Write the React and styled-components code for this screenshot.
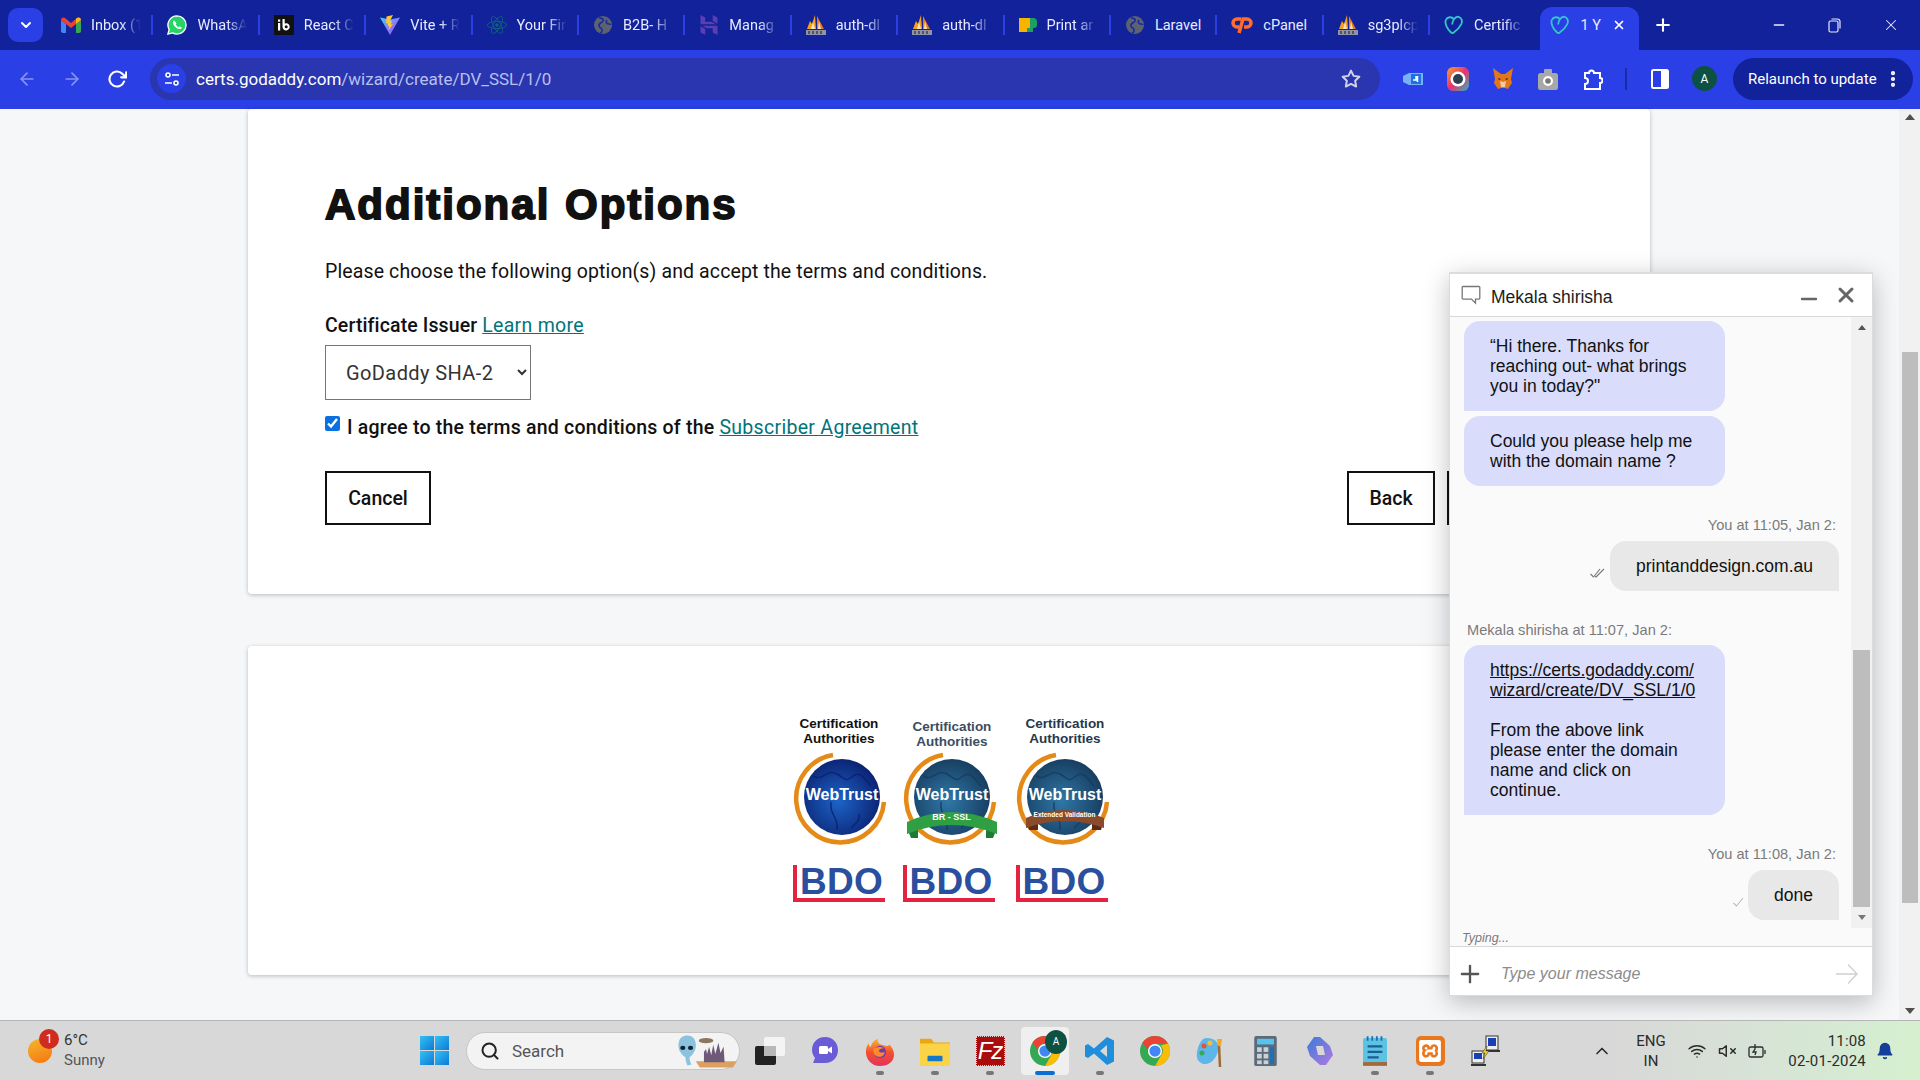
import styled, { createGlobalStyle } from "styled-components";
import { FaReact } from "react-icons/fa";
import { SiHostinger, SiXampp } from "react-icons/si";
import {
  FiArrowLeft,
  FiArrowRight,
  FiRotateCw,
  FiStar,
  FiChevronDown,
  FiX,
  FiMinus,
  FiPlus,
  FiMoreVertical,
  FiSearch,
  FiChevronUp,
  FiWifi,
  FiVolumeX,
  FiBell,
} from "react-icons/fi";

const GlobalStyle = createGlobalStyle`
  html, body {
    margin: 0;
    padding: 0;
    height: 100%;
    overflow: hidden;
  }
  * { box-sizing: border-box; }
  body { font-family: "Roboto", "Liberation Sans", sans-serif; }
`;

const Screen = styled.div`
  width: 1920px;
  height: 1080px;
  display: flex;
  flex-direction: column;
  overflow: hidden;
`;

/* browser chrome */
const TabStrip = styled.div`
  height: 50px;
  display: flex;
  align-items: center;
  background: #11229b;
  padding-left: 8px;
`;

const TabMenu = styled.div`
  width: 35px;
  height: 34px;
  margin-right: 4px;
  border-radius: 10px;
  background: #2a3fe6;
  color: #fff;
  display: flex;
  align-items: center;
  justify-content: center;
  font-size: 16px;
`;

const Tab = styled.div`
  width: 106.4px;
  height: 20px;
  flex: none;
  display: flex;
  align-items: center;
  gap: 10px;
  padding-left: 14px;
  border-right: 2px solid ${({ $last }) => ($last ? "transparent" : "#2a3fe6")};
  color: #e8ebff;
  font-size: 14.5px;
  white-space: nowrap;

  span {
    display: block;
    ${({ $fade }) =>
      $fade &&
      `
      -webkit-mask-image: linear-gradient(90deg, #000 30px, transparent 50px);
      mask-image: linear-gradient(90deg, #000 30px, transparent 50px);
    `}
  }
  svg { flex: none; }
`;

const ActiveTab = styled.div`
  width: 99px;
  height: 43px;
  margin: 7px 0 0 4px;
  padding: 0 13px 7px 10px;
  flex: none;
  border-radius: 12px 12px 0 0;
  background: #2a3fe6;
  color: #e8ebff;
  font-size: 14.5px;
  white-space: nowrap;
  display: flex;
  align-items: center;
  gap: 10px;

  svg:last-child { margin-left: auto; }
`;

const NewTab = styled.div`
  margin-left: 14px;
  color: #fff;
  font-size: 20px;
  display: flex;
`;

const WindowButtons = styled.div`
  margin-left: auto;
  display: flex;
  align-items: center;
  gap: 41px;
  padding-right: 20px;
  color: #e8ebff;
  font-size: 18px;
`;

const Toolbar = styled.div`
  height: 59px;
  background: #2a3fe6;
  display: flex;
  align-items: center;
  padding: 0 0 2px 17px;
`;

const NavIcons = styled.div`
  display: flex;
  align-items: center;
  gap: 25px;
  width: 133px;
  font-size: 20px;
`;

const NavIcon = styled.span`
  display: flex;
  color: ${({ $off }) => ($off ? "#8795f2" : "#fff")};
`;

const UrlBar = styled.div`
  width: 1230px;
  height: 42px;
  border-radius: 21px;
  background: #2936b0;
  display: flex;
  align-items: center;
  padding: 0 19px 0 7px;
  font-size: 17px;
  color: #b9c0ee;
`;

const SiteInfo = styled.div`
  width: 29px;
  height: 29px;
  border-radius: 50%;
  background: #2a3fe6;
  display: flex;
  align-items: center;
  justify-content: center;
  margin-right: 10px;
`;

const Host = styled.span`
  color: #fff;
`;

const UrlStar = styled.span`
  margin-left: auto;
  display: flex;
  color: #cfd3ea;
  font-size: 20px;
`;

const ExtIcons = styled.div`
  display: flex;
  align-items: center;
  margin-left: 10px;
`;

const ExtSlot = styled.div`
  width: ${({ $w }) => $w || 45}px;
  display: flex;
  align-items: center;
  justify-content: center;
`;

const Divider = styled.div`
  width: 2px;
  height: 22px;
  background: #1c2aa8;
`;

const Avatar = styled.div`
  width: 25px;
  height: 25px;
  border-radius: 50%;
  background: #0d5142;
  color: #fff;
  font-size: 12px;
  display: flex;
  align-items: center;
  justify-content: center;
`;

const Relaunch = styled.div`
  margin-left: 6px;
  width: 180px;
  height: 42px;
  border-radius: 21px;
  background: #11229b;
  color: #fff;
  font-size: 15px;
  display: flex;
  align-items: center;
  justify-content: space-between;
  padding: 0 10px 0 15px;
`;

/* page */
const Viewport = styled.div`
  flex: 1;
  min-height: 0;
  background: #f5f7f8;
  position: relative;
  display: flex;
`;

const Page = styled.div`
  width: 1899px;
  padding-left: 248px;
`;

const Card = styled.section`
  width: 1402px;
  background: #fff;
  border-radius: 4px;
  box-shadow: 0 1px 4px rgba(0, 0, 0, 0.25);
`;

const OptionsCard = styled(Card)`
  height: 485px;
  padding: 72px 77px 0;
  color: #111;
`;

const Title = styled.h2`
  margin: 0 0 30px;
  font-family: "Liberation Sans", sans-serif;
  font-weight: 700;
  font-size: 42px;
  line-height: 48px;
  letter-spacing: 2px;
  word-spacing: 1px;
  color: #111;
  -webkit-text-stroke: 1.8px #111;
`;

const BodyText = styled.p`
  margin: 0 0 28px;
  font-size: 19.5px;
  line-height: 26px;
  letter-spacing: 0.12px;
`;

const FieldLabel = styled.div`
  font-size: 19.5px;
  line-height: 26px;
  font-weight: 500;
  letter-spacing: 0.12px;
  margin-bottom: 6px;
`;

const TextLink = styled.a`
  color: #00747a;
  text-decoration: underline;
  font-weight: 400;
  letter-spacing: 0.3px;
`;

const IssuerSelect = styled.select`
  display: block;
  width: 206px;
  height: 55px;
  padding: 0 8px 0 16px;
  border: 1px solid #767676;
  border-radius: 0;
  background: #fff;
  color: #333;
  font-family: inherit;
  font-size: 20px;
  letter-spacing: 0.4px;
  margin-bottom: 15px;
`;

const AgreeRow = styled.label`
  display: flex;
  align-items: flex-start;
  gap: 7px;
  font-size: 19.5px;
  line-height: 26px;
  font-weight: 500;
  letter-spacing: 0.2px;
  height: 26px;

  input {
    width: 15px;
    height: 15px;
    margin: 1px 0 0;
    accent-color: #0a6fe0;
  }
`;

const ButtonRow = styled.div`
  display: flex;
  justify-content: space-between;
  margin-top: 30px;
`;

const OutlineButton = styled.div`
  height: 54px;
  width: ${({ $w }) => $w}px;
  border: 2px solid #111;
  font-size: 19.5px;
  font-weight: 500;
  display: flex;
  align-items: center;
  justify-content: center;
`;

const RightButtons = styled.div`
  display: flex;
  gap: 12px;
`;

const SealCard = styled(Card)`
  height: 329px;
  margin-top: 52px;
  display: flex;
  justify-content: center;
  padding-top: 70px;
`;

const Seals = styled.div`
  display: flex;
  gap: 13px;
  margin-left: 6px;
`;

const Seal = styled.div`
  width: 100px;
  display: flex;
  flex-direction: column;
  align-items: center;
`;

const SealCaption = styled.div`
  font-family: "Liberation Sans", sans-serif;
  font-weight: 700;
  font-size: 13.5px;
  line-height: 15px;
  text-align: center;
  color: ${({ $c }) => $c};
  height: 36px;
  padding-top: ${({ $top }) => $top || 0}px;
`;

const Globe = styled.div`
  width: 96px;
  height: 96px;
  position: relative;
  display: flex;
  align-items: flex-start;
  justify-content: center;
  margin-bottom: 17px;
  margin-left: ${({ $shift }) => $shift || 0}px;

  svg { position: absolute; inset: 0; }
`;

const GlobeWord = styled.div`
  position: relative;
  font-family: "Liberation Sans", sans-serif;
  font-weight: 700;
  font-size: 16px;
  line-height: 20px;
  color: #fff;
  margin: 33px 0 0 3px;
`;

const RibbonText = styled.div`
  position: absolute;
  left: 0;
  right: 0;
  top: ${({ $top }) => $top}px;
  padding-left: 2px;
  color: #fff;
  font-family: "Liberation Sans", sans-serif;
  font-weight: 700;
  font-size: ${({ $size }) => $size}px;
  line-height: 10px;
  text-align: center;
`;

const Bdo = styled.div`
  width: 92px;
  margin-left: ${({ $shift }) => $shift || 0}px;
  border-left: 4px solid #e3233f;
  border-bottom: 4px solid #e3233f;
  height: 37px;
  font-family: "Liberation Sans", sans-serif;
  font-weight: 700;
  font-size: 37px;
  line-height: 33px;
  letter-spacing: 0.3px;
  color: #2a4f9e;
  padding-left: 3px;
`;

const Scrollbar = styled.div`
  width: 21px;
  background: #f1f1f1;
  display: flex;
  flex-direction: column;
  align-items: center;
  justify-content: space-between;
  padding: 5px 0 6px;
  position: relative;
`;

const ScrollThumb = styled.div`
  position: absolute;
  left: 2.5px;
  right: 2px;
  top: 243px;
  height: 551px;
  background: #bdbdbd;
`;

const Triangle = styled.div`
  width: 0;
  height: 0;
  border-left: 5px solid transparent;
  border-right: 5px solid transparent;
  ${({ $down }) =>
    $down ? "border-top: 6px solid #505050;" : "border-bottom: 6px solid #505050;"}
`;

/* chat */
const ChatWindow = styled.aside`
  position: absolute;
  left: 1449px;
  top: 163px;
  width: 424px;
  height: 724px;
  display: flex;
  flex-direction: column;
  background: #fafafa;
  border: 1px solid #dcdcdc;
  border-top-width: 2px;
  box-shadow: 0 6px 24px rgba(0, 0, 0, 0.25);
  font-family: "Liberation Sans", sans-serif;
  color: #111;
`;

const ChatHeader = styled.header`
  height: 43px;
  flex: none;
  background: #fff;
  border-bottom: 1px solid #d8d8d8;
  display: flex;
  align-items: center;
  padding: 0 14px 0 11px;
  font-size: 17.5px;
  color: #1c1c1c;
`;

const ChatName = styled.span`
  margin-left: 10px;
  margin-top: 5px;
`;

const HeaderIcons = styled.div`
  margin-left: auto;
  display: flex;
  align-items: center;
  gap: 13px;
  color: #666;

  svg:first-child { margin-top: 8px; }
`;

const ChatBody = styled.div`
  flex: 1;
  min-height: 0;
  display: flex;
`;

const Messages = styled.div`
  flex: 1;
  padding: 4px 12px 0 14px;
  display: flex;
  flex-direction: column;
`;

const ChatScroll = styled.div`
  width: 21px;
  background: #f1f1f1;
  position: relative;
  display: flex;
  flex-direction: column;
  align-items: center;
  justify-content: space-between;
  padding: 8px 0;
`;

const ChatThumb = styled.div`
  position: absolute;
  left: 2px;
  right: 2px;
  top: 333px;
  height: 257px;
  background: #bdbdbd;
`;

const SmallTriangle = styled(Triangle)`
  border-left-width: 4.5px;
  border-right-width: 4.5px;
  ${({ $down }) =>
    $down ? "border-top: 5px solid #777;" : "border-bottom: 5px solid #555;"}
`;

const Incoming = styled.div`
  width: 261px;
  padding: 15px 0 15px 26px;
  background: #d9dcfb;
  border-radius: 16px;
  border-bottom-left-radius: ${({ $flat }) => ($flat ? 0 : 16)}px;
  font-size: 17.5px;
  line-height: 20px;
  margin-bottom: ${({ $gap }) => $gap || 5}px;
  white-space: nowrap;

  a { color: inherit; text-decoration: underline; }
`;

const Meta = styled.div`
  font-size: 14.6px;
  line-height: 18px;
  color: #7a7a7a;
  text-align: ${({ $right }) => ($right ? "right" : "left")};
  padding: ${({ $right }) => ($right ? "0 3px 0 0" : "0 0 0 3px")};
  margin-bottom: ${({ $mb }) => $mb || 7}px;
`;

const OutgoingRow = styled.div`
  display: flex;
  justify-content: flex-end;
  align-items: center;
  gap: 4px;
  margin-bottom: ${({ $gap }) => $gap || 0}px;

  svg { margin-top: 14px; }
`;

const Outgoing = styled.div`
  height: 50px;
  padding: 0 26px;
  background: #e8e8e8;
  border-radius: 16px 16px 0 16px;
  font-size: 17.5px;
  display: flex;
  align-items: center;
`;

const Typing = styled.div`
  height: 18px;
  flex: none;
  font-size: 12.5px;
  font-style: italic;
  color: #7a7a7a;
  padding: 3px 0 0 12px;
`;

const Composer = styled.div`
  height: 49px;
  flex: none;
  background: #fff;
  border-top: 1px solid #d8d8d8;
  display: flex;
  align-items: center;
  padding: 5px 14px 0 6px;
  color: #555;
`;

const ComposerHint = styled.span`
  margin-left: 17px;
  font-size: 16px;
  font-style: italic;
  color: #8c8c8c;
`;

const SendIcon = styled.span`
  margin-left: auto;
  display: flex;
  color: #d0d0d0;
`;

/* taskbar */
const Taskbar = styled.footer`
  height: 60px;
  flex: none;
  border-top: 1px solid #b6b6b6;
  background: linear-gradient(90deg, #d8d8d8 84%, #d6e8d4 95%, #d5f0cf);
  display: flex;
  align-items: center;
  position: relative;
  color: #2c2c2c;
`;

const Weather = styled.div`
  width: 420px;
  padding-left: 28px;
  display: flex;
  align-items: center;
  gap: 12px;
  flex: none;
`;

const SunIcon = styled.div`
  width: 24px;
  height: 24px;
  border-radius: 50%;
  background: linear-gradient(160deg, #f5b82e, #f5740f);
  position: relative;
`;

const Badge = styled.div`
  position: absolute;
  top: -10px;
  left: 11px;
  width: 20px;
  height: 20px;
  border-radius: 50%;
  background: #cf2b1f;
  color: #fff;
  font-size: 12px;
  display: flex;
  align-items: center;
  justify-content: center;
`;

const WeatherText = styled.div`
  font-size: 15px;
  line-height: 20px;
  color: #333;
  margin-top: -1px;

  div + div { color: #555; }
`;

const StartIcon = styled.div`
  width: 29px;
  height: 29px;
  display: grid;
  grid-template-columns: 1fr 1fr;
  gap: 1.5px;
  flex: none;
  margin-right: 17px;
  i {
    display: block;
    background: linear-gradient(135deg, #35c1f5, #0b7ad6);
  }
`;

const SearchBox = styled.div`
  width: 274px;
  height: 38px;
  flex: none;
  border-radius: 19px;
  background: #f3f3f3;
  border: 1px solid #c6c6c6;
  display: flex;
  align-items: center;
  padding: 0 2px 0 13px;
  gap: 12px;
  font-size: 17px;
  color: #555;
`;

const SearchArt = styled.div`
  margin-left: auto;
  display: flex;
`;

const TaskIcons = styled.div`
  display: flex;
  align-items: center;
  margin-left: 2.5px;
`;

const TaskIcon = styled.div`
  width: 48px;
  height: 48px;
  margin: 0 3.5px;
  flex: none;
  display: flex;
  align-items: center;
  justify-content: center;
  position: relative;
  border-radius: 4px;
  background: ${({ $active }) => ($active ? "#efefef" : "transparent")};

  &::after {
    content: "";
    position: absolute;
    bottom: 0;
    left: 50%;
    transform: translateX(-50%);
    display: ${({ $dot, $active }) => ($dot || $active ? "block" : "none")};
    width: ${({ $active }) => ($active ? 20 : 8)}px;
    height: 4px;
    border-radius: 2px;
    background: ${({ $active }) => ($active ? "#0a6fd1" : "#777")};
  }
`;

const FzBox = styled.div`
  width: 29px;
  height: 30px;
  background: #a80c0c;
  color: #fff;
  font-family: "Liberation Sans", sans-serif;
  font-style: italic;
  font-size: 24px;
  display: flex;
  align-items: center;
  justify-content: center;
  letter-spacing: -1px;
  border: 1px dotted #f0d0d0;
`;

const XamppBox = styled.div`
  width: 29px;
  height: 30px;
  border-radius: 5px;
  background: #e8771f;
  color: #fff;
  display: flex;
  align-items: center;
  justify-content: center;
`;

const ChromeBadge = styled.div`
  position: absolute;
  top: 3px;
  right: 2px;
  width: 22px;
  height: 24px;
  border-radius: 50%;
  background: #0d5142;
  color: #fff;
  font-size: 10px;
  display: flex;
  align-items: center;
  justify-content: center;
`;

const Tray = styled.div`
  position: absolute;
  right: 0;
  top: 0;
  bottom: 0;
  width: 330px;
  display: flex;
  align-items: center;
  color: #2c2c2c;
  font-size: 15px;
`;

const TrayCaret = styled.span`
  display: flex;
  width: 24px;
  justify-content: center;
  font-size: 20px;
`;

const Lang = styled.div`
  width: 44px;
  margin-left: 15px;
  text-align: center;
  line-height: 20px;
`;

const TrayIcons = styled.div`
  display: flex;
  align-items: center;
  gap: 12px;
  margin-left: 15px;
  font-size: 18px;
`;

const Clock = styled.div`
  margin-left: auto;
  text-align: right;
  line-height: 20px;
  letter-spacing: 0.2px;
`;

const BellWrap = styled.span`
  display: flex;
  color: #14409a;
  margin: 0 26px 0 10px;
  font-size: 18px;
`;

/* icons */
const Gmail = () => (
  <svg width="20" height="16" viewBox="0 0 20 16">
    <path d="M0 3v11a2 2 0 0 0 2 2h3V7z" fill="#4285f4" />
    <path d="M20 3v11a2 2 0 0 1-2 2h-3V7z" fill="#34a853" />
    <path d="M0 3a2.5 2.5 0 0 1 4-2l6 5 6-5a2.5 2.5 0 0 1 4 2l-5 4-5 4-5-4z" fill="#ea4335" />
    <path d="M15 7l5-4a2.5 2.5 0 0 0-4-2l-1 .8z" fill="#fbbc04" />
  </svg>
);

const Whatsapp = () => (
  <svg width="20" height="22" viewBox="0 0 22 22">
    <path d="M11 1a10 10 0 0 1 0 20c-1.800 0-3.400-.5-4.800-1.300L1 21l1.400-5A10 10 0 0 1 11 1z" fill="#25d366" stroke="#fff" strokeWidth="1.500" />
    <path d="M8 6c-.7 0-1.500.8-1.500 2 0 3.500 4 7.500 7.500 7.500 1.300 0 2.200-.8 2.200-1.800l-2.400-1.200-1.100 1c-1.200-.4-2.700-2-3.200-3.200l1-1.100z" fill="#fff" />
  </svg>
);

const Ib = () => (
  <svg width="20" height="20" viewBox="0 0 20 20">
    <rect width="20" height="20" fill="#111" />
    <rect x="4" y="4.500" width="2.200" height="2.200" fill="#fff" />
    <rect x="4" y="8" width="2.200" height="7.500" fill="#fff" />
    <path d="M8.500 4h2.200v4.500a3.600 3.600 0 1 1-2.200 3.200zM10.700 11.800a1.500 1.500 0 1 0 3 0 1.500 1.500 0 0 0-3 0z" fill="#fff" fillRule="evenodd" />
  </svg>
);

const Vite = () => (
  <svg width="20" height="20" viewBox="0 0 20 20">
    <defs>
      <linearGradient id="viteBody" x1="0" y1="0" x2="1" y2="1">
        <stop offset="0" stopColor="#41d1ff" />
        <stop offset="1" stopColor="#bd34fe" />
      </linearGradient>
    </defs>
    <path d="M0 2.500L10 20 20 2.500 10 4.500z" fill="url(#viteBody)" />
    <path d="M13 0L6.500 1.400l-.4 7.200 2-.4-.5 3.400 1.700-.5-.8 4.500L13 9l-2 .4.900-4-2 .5z" fill="#ffc82e" />
  </svg>
);

const GrayGlobe = () => (
  <svg width="20" height="20" viewBox="0 0 20 20">
    <circle cx="10" cy="10" r="9" fill="#5c6270" />
    <path d="M6 3c3 0 5 1 4 3S5 8 6 11s3 1 3 4-1 3-2 3 M14 5c-2 2 0 4 2 4s2 1 2 1" fill="none" stroke="#1a2a9c" strokeWidth="1.600" />
  </svg>
);

const ArcSail = () => (
  <svg width="20" height="20" viewBox="0 0 20 20">
    <path d="M1 14L4 6l2 3 3-9 1 14z" fill="#f2a11e" />
    <path d="M11 1l7 13h-7z" fill="#e8781a" />
    <path d="M7 7l2 7H5zM13 6l2 8h-3z" fill="#f7e2c0" />
    <path d="M0 15h20v5H0z" fill="#8e93a8" />
    <path d="M3 16v3M7 16v3M11 16v3M15 16v3" stroke="#2a2a40" strokeWidth="1.200" />
  </svg>
);

const PrintLogo = () => (
  <svg width="18" height="14" viewBox="0 0 18 14">
    <rect width="11" height="14" fill="#f4b400" />
    <path d="M11 0h3a4 4 0 0 1 4 4v3a3 3 0 0 1-3 3h-1v4H8v-4h3z" fill="#1f9e62" />
    <rect y="0" width="8" height="14" fill="#f4b400" />
  </svg>
);

const CpanelLogo = () => (
  <svg width="22" height="20" viewBox="0 0 22 20" fill="none" stroke="#ff6c2c" strokeWidth="3.500">
    <path d="M10 4H6a3.500 3.500 0 0 0 0 8h2" />
    <path d="M8 18l4-14h4a4 4 0 0 1 0 8h-3" />
  </svg>
);

const GoDaddyHeart = ({ color = "#35c5c9" }) => (
  <svg width="20" height="20" viewBox="0 0 22 20" fill="none" stroke={color} strokeWidth="2">
    <path d="M11 3.500C8.500.5 3.500.8 2 4.500c-1.500 4 1.500 10 6 14 1 .5 2 .5 3-.5 3-2 6-5 8-9 1.500-3.500.5-7-3-8-2-.5-3.500.5-5 2.500-1 1.500-2 4-2 6" />
  </svg>
);

const ChromeIcon = ({ size = 30 }) => (
  <svg width={size} height={size} viewBox="0 0 32 32">
    <circle cx="16" cy="16" r="16" fill="#34a853" />
    <path d="M16 0a16 16 0 0 1 13.900 8H16a8 8 0 0 0-7.900 6.700L2.700 7A16 16 0 0 1 16 0z" fill="#ea4335" />
    <path d="M29.900 8A16 16 0 0 1 16 32l6.900-12A8 8 0 0 0 22 10z" fill="#fbbc04" />
    <circle cx="16" cy="16" r="7.500" fill="#fff" />
    <circle cx="16" cy="16" r="6" fill="#4285f4" />
  </svg>
);

const SiteInfoIcon = () => (
  <svg width="16" height="16" viewBox="0 0 16 16" fill="none" stroke="#fff" strokeWidth="1.600">
    <circle cx="4" cy="4" r="2" />
    <path d="M8 4h7M1 12h7" />
    <circle cx="12" cy="12" r="2" />
  </svg>
);

const OutlookExt = () => (
  <svg width="20" height="18" viewBox="0 0 20 18">
    <path d="M0 6l6-3h14v12H6L0 12z" fill="#7ab0f5" />
    <rect x="8" y="4" width="10" height="10" fill="#1e70e8" />
    <path d="M13 6v4h-3M14.500 6v6" stroke="#fff" strokeWidth="1.500" fill="none" />
  </svg>
);

const LensExt = () => (
  <svg width="22" height="24" viewBox="0 0 22 24">
    <defs>
      <linearGradient id="lensGrad" x1="0" y1="0" x2="1" y2="1">
        <stop offset="0" stopColor="#f5a623" />
        <stop offset="0.500" stopColor="#e8326e" />
        <stop offset="1" stopColor="#2bb6c3" />
      </linearGradient>
    </defs>
    <rect width="22" height="24" rx="6" fill="url(#lensGrad)" />
    <circle cx="11" cy="12" r="7.500" fill="#fff" />
    <circle cx="11" cy="12" r="5" fill="#2c3e50" />
  </svg>
);

const FoxExt = () => (
  <svg width="22" height="24" viewBox="0 0 22 24">
    <path d="M1 1l8 6h4l8-6-2 11 1 4-4 6-3-1H9l-3 1-4-6 1-4z" fill="#e2761b" />
    <path d="M8 14l3 1 3-1-1 6H9z" fill="#f6c9a0" />
    <path d="M6 11l3 1-2 1zM16 11l-3 1 2 1z" fill="#222" />
  </svg>
);

const CameraExt = () => (
  <svg width="20" height="22" viewBox="0 0 20 22">
    <rect y="5" width="20" height="17" rx="2.500" fill="#a8a8a8" />
    <rect x="6" y="1" width="8" height="5" rx="1" fill="#a8a8a8" />
    <circle cx="10" cy="13" r="5" fill="#fff" />
    <circle cx="10" cy="13" r="2.800" fill="#777" />
  </svg>
);

const PuzzleIcon = () => (
  <svg width="20" height="24" viewBox="0 0 20 24" fill="none" stroke="#fff" strokeWidth="2">
    <path d="M2 6h4a2.500 2.500 0 0 1 5 0h6v5a2.500 2.500 0 0 1 0 5v6H2v-5a2.500 2.500 0 0 0 0-6z" />
  </svg>
);

const SidePanelIcon = () => (
  <svg width="18" height="20" viewBox="0 0 18 20">
    <rect x="1" y="1" width="16" height="18" rx="1.500" fill="none" stroke="#fff" strokeWidth="2" />
    <rect x="10" y="1" width="7" height="18" fill="#fff" />
  </svg>
);

const RestoreIcon = () => (
  <svg width="13" height="15" viewBox="0 0 13 15" fill="none" stroke="#e8ebff" strokeWidth="1.200">
    <rect x="1" y="3" width="9" height="11" rx="1.500" />
    <path d="M3.500 1h6a2.500 2.500 0 0 1 2.500 2.500v7" />
  </svg>
);

const GlobeArt = ({ id, deep, rim, band, bandColor, tails, tailColor }) => (
  <svg width="96" height="96" viewBox="0 0 96 96">
    <defs>
      <radialGradient id={id} cx="0.450" cy="0.550" r="0.600">
        <stop offset="0" stopColor={rim} />
        <stop offset="1" stopColor={deep} />
      </radialGradient>
    </defs>
    <path d="M40 3A44 44 0 1 0 91 50" fill="none" stroke="#e58a16" strokeWidth="4.500" />
    <circle cx="49" cy="45" r="38" fill={`url(#${id})`} />
    <path d="M20 24c10 6 14-8 24-2s8 8 16 2 12 4 18 10M38 50c-2 14 8 14 6 28M66 62c2 6-4 10-8 14" fill="none" stroke={deep} strokeWidth="1.500" opacity="0.800" />
    {band && (
      <>
        <path d={tails} fill={tailColor} />
        <path d={band} fill={bandColor} />
      </>
    )}
  </svg>
);

const Chatbubble = () => (
  <svg width="20" height="20" viewBox="0 0 20 20" fill="none" stroke="#777" strokeWidth="1.300">
    <path d="M2 1.500h16a.8.800 0 0 1 .8.800v11a.8.800 0 0 1-.8.800h-3.500v4l-4-4H2a.8.800 0 0 1-.8-.8v-11a.8.800 0 0 1 .8-.800z" />
  </svg>
);

const DoubleTick = () => (
  <svg width="16" height="10" viewBox="0 0 16 10" fill="none" stroke="#777" strokeWidth="1.100">
    <path d="M0.500 6l3 3 6.500-8" />
    <path d="M5 8.500l1 .5 8-8" />
  </svg>
);

const SingleTick = () => (
  <svg width="11" height="10" viewBox="0 0 11 10" fill="none" stroke="#bbb" strokeWidth="1.100">
    <path d="M0.500 6l3 3 6.500-8" />
  </svg>
);

const SendArrow = () => (
  <svg width="22" height="22" viewBox="0 0 22 22" fill="none" stroke="currentColor" strokeWidth="1.400">
    <path d="M0 11h21M12 1.500L21 11l-9 9.500" />
  </svg>
);

const AlienArt = () => (
  <svg width="64" height="34" viewBox="0 0 62 32">
    <path d="M22 26h40l-4 6H26z" fill="#dda05e" />
    <path d="M30 27V17l2-3 1 5 2-7 2 8 2-10 2 9 3-11 2 10 3-6 1 15z" fill="#6d5a78" />
    <path d="M14 30c-2-5-2-8-2-8C6 18 4 12 6 6c2-6 12-7 15-1 3 6 0 14-5 17 0 0 0 4 2 7z" fill="#8bc3df" />
    <ellipse cx="9.500" cy="13" rx="2.500" ry="2" fill="#123" />
    <ellipse cx="17" cy="13" rx="2.500" ry="2" fill="#123" />
    <ellipse cx="32" cy="6" rx="7" ry="2.500" fill="#8a7762" />
  </svg>
);

const Copilot = () => (
  <svg width="28" height="30" viewBox="0 0 28 30">
    <defs>
      <linearGradient id="copilotGrad" x1="0" y1="0" x2="1" y2="1">
        <stop offset="0" stopColor="#3b7bd8" />
        <stop offset="1" stopColor="#b27ae0" />
      </linearGradient>
    </defs>
    <path d="M8 1h6l10 9 3 9-7 10h-6L4 20 1 11z" fill="url(#copilotGrad)" />
    <path d="M10 10h7l2 9h-7z" fill="#d8d8d8" />
  </svg>
);

const Paint = () => (
  <svg width="30" height="32" viewBox="0 0 30 32">
    <path d="M12 3c8 0 13 5 11 13s-8 14-14 13-8-6-7-12S6 3 12 3z" fill="#5eb6e8" />
    <circle cx="9" cy="11" r="2.500" fill="#e94f3d" />
    <circle cx="15" cy="8" r="2.500" fill="#f5c02e" />
    <circle cx="7" cy="18" r="2.500" fill="#37a85a" />
    <path d="M24 10l1 22" stroke="#9c6b3a" strokeWidth="2.500" />
    <path d="M22 4h5l-1 7h-3z" fill="#f5a623" />
  </svg>
);

const Calculator = () => (
  <svg width="23" height="30" viewBox="0 0 24 32">
    <rect width="24" height="32" rx="2" fill="#5d6b78" />
    <rect x="3" y="3" width="18" height="6" fill="#55c4ee" />
    <g fill="#c9d2da">
      <rect x="3" y="12" width="5" height="5" />
      <rect x="10" y="12" width="5" height="5" />
      <rect x="3" y="19" width="5" height="5" />
      <rect x="10" y="19" width="5" height="5" />
      <rect x="3" y="26" width="5" height="4" />
      <rect x="10" y="26" width="5" height="4" />
    </g>
    <rect x="17" y="12" width="4" height="18" fill="#1f6fb8" />
  </svg>
);

const Notepad = () => (
  <svg width="24" height="30" viewBox="0 0 26 32">
    <rect y="2" width="26" height="30" rx="2" fill="#5cc3e2" />
    <rect y="28" width="26" height="4" fill="#a5683a" />
    <path d="M5 0v5M10 0v5M15 0v5M20 0v5" stroke="#1f6fb8" strokeWidth="2" />
    <path d="M5 11h16M5 17h16M5 23h12" stroke="#1b5e94" strokeWidth="2.500" />
  </svg>
);

const Folder = () => (
  <svg width="30" height="30" viewBox="0 0 32 32">
    <path d="M0 3h12l3 4h17v25H0z" fill="#e9a80f" />
    <rect y="8" width="32" height="24" fill="#fbd347" />
    <rect x="8" y="21" width="16" height="6" rx="1" fill="#1478c8" />
  </svg>
);

const Firefox = () => (
  <svg width="30" height="30" viewBox="0 0 30 32">
    <defs>
      <linearGradient id="foxGrad" x1="0.500" y1="0" x2="0.500" y2="1">
        <stop offset="0" stopColor="#ffb32e" />
        <stop offset="0.500" stopColor="#f1502f" />
        <stop offset="1" stopColor="#e6315f" />
      </linearGradient>
    </defs>
    <path d="M15 32C6 32 0 25 0 17c0-4 1-7 3-9 0 2 1 3 2 4 1-4 4-8 8-9-1 3 0 5 3 6 5 1 7 3 9 0 3 3 5 7 5 11 0 7-6 12-15 12z" fill="url(#foxGrad)" />
    <circle cx="15" cy="17" r="6.500" fill="#6d3bb3" />
    <path d="M8 14c3-3 8-3 11-1-3 0-5 1-5 3s4 2 6 1c0 3-3 6-7 5-4-1-6-5-5-8z" fill="#ff8a2b" />
  </svg>
);

const VsCode = () => (
  <svg width="30" height="30" viewBox="0 0 30 30">
    <path d="M22 1l7 3.500v21L22 29 9 17.500 3 22l-3-1.500v-11L3 8l6 4.500zM22 9l-7 6 7 6z" fill="#1f8fdc" />
  </svg>
);

const Remote = () => (
  <svg width="30" height="32" viewBox="0 0 30 32">
    <rect x="16" y="1" width="12" height="14" fill="#eee" stroke="#333" />
    <rect x="18" y="3" width="8" height="8" fill="#1a3fb5" />
    <rect x="2" y="16" width="12" height="12" fill="#eee" stroke="#333" />
    <rect x="4" y="18" width="8" height="6" fill="#1a3fb5" />
    <path d="M1 30h15M14 16h16" stroke="#333" strokeWidth="2" />
    <path d="M17 11l-5 7h3l-2 6 6-8h-3z" fill="#f2d21a" stroke="#333" strokeWidth="0.500" />
  </svg>
);

const ChatIconTask = () => (
  <svg width="28" height="30" viewBox="0 0 28 30">
    <path d="M14 1c8 0 13 6 13 13s-5 13-13 13H2l2-5C2 19 1 17 1 14 1 7 6 1 14 1z" fill="#6a5cd6" />
    <rect x="8" y="10" width="9" height="8" rx="1.500" fill="#fff" />
    <path d="M17 13l4-2.500v7L17 15z" fill="#fff" />
  </svg>
);

const TaskView = () => (
  <svg width="30" height="28" viewBox="0 0 30 28">
    <rect x="9" y="0" width="21" height="19" rx="2" fill="#f4f4f4" />
    <rect y="9" width="21" height="19" rx="2" fill="#222" />
    <rect x="9" y="9" width="12" height="10" fill="#b8b8b8" />
  </svg>
);

const BatteryIcon = () => (
  <svg width="18" height="18" viewBox="0 0 18 18" fill="none" stroke="#2c2c2c" strokeWidth="1.300">
    <rect x="1" y="5" width="14" height="10" rx="1.500" />
    <path d="M17 8v4M7 2v5l-2 3h3l-1 3" />
  </svg>
);

const tabs = [
  { icon: <Gmail />, label: "Inbox (1", fade: true },
  { icon: <Whatsapp />, label: "WhatsA", fade: true },
  { icon: <Ib />, label: "React C", fade: true },
  { icon: <Vite />, label: "Vite + R", fade: true },
  { icon: <FaReact size={20} color="#10617d" />, label: "Your Fir", fade: true },
  { icon: <GrayGlobe />, label: "B2B- H", fade: true },
  { icon: <SiHostinger size={20} color="#5a3fb0" />, label: "Manag", fade: true },
  { icon: <ArcSail />, label: "auth-dl", fade: true },
  { icon: <ArcSail />, label: "auth-dl", fade: true },
  { icon: <PrintLogo />, label: "Print ar", fade: true },
  { icon: <GrayGlobe />, label: "Laravel" },
  { icon: <CpanelLogo />, label: "cPanel" },
  { icon: <ArcSail />, label: "sg3plcp", fade: true },
  { icon: <GoDaddyHeart />, label: "Certific", fade: true },
];

const App = () => (
  <>
    <GlobalStyle />
    <Screen>
      <TabStrip>
        <TabMenu>
          <FiChevronDown strokeWidth={3} />
        </TabMenu>
        {tabs.map((tab, i) => (
          <Tab key={i} $last={i === tabs.length - 1} $fade={tab.fade}>
            {tab.icon}
            <span>{tab.label}</span>
          </Tab>
        ))}
        <ActiveTab>
          <GoDaddyHeart />
          <span>1 Y</span>
          <FiX color="#fff" size={14} strokeWidth={3} />
        </ActiveTab>
        <NewTab>
          <FiPlus strokeWidth={2.5} />
        </NewTab>
        <WindowButtons>
          <FiMinus size={16} />
          <RestoreIcon />
          <FiX strokeWidth={1.4} />
        </WindowButtons>
      </TabStrip>

      <Toolbar>
        <NavIcons>
          <NavIcon $off>
            <FiArrowLeft />
          </NavIcon>
          <NavIcon $off>
            <FiArrowRight />
          </NavIcon>
          <NavIcon>
            <FiRotateCw strokeWidth={2.6} />
          </NavIcon>
        </NavIcons>
        <UrlBar>
          <SiteInfo>
            <SiteInfoIcon />
          </SiteInfo>
          <Host>certs.godaddy.com</Host>/wizard/create/DV_SSL/1/0
          <UrlStar>
            <FiStar strokeWidth={2.4} />
          </UrlStar>
        </UrlBar>
        <ExtIcons>
          <ExtSlot>
            <OutlookExt />
          </ExtSlot>
          <ExtSlot>
            <LensExt />
          </ExtSlot>
          <ExtSlot>
            <FoxExt />
          </ExtSlot>
          <ExtSlot>
            <CameraExt />
          </ExtSlot>
          <ExtSlot>
            <PuzzleIcon />
          </ExtSlot>
          <ExtSlot $w={22}>
            <Divider />
          </ExtSlot>
          <ExtSlot>
            <SidePanelIcon />
          </ExtSlot>
          <ExtSlot>
            <Avatar>A</Avatar>
          </ExtSlot>
        </ExtIcons>
        <Relaunch>
          Relaunch to update
          <FiMoreVertical size={20} strokeWidth={3} />
        </Relaunch>
      </Toolbar>

      <Viewport>
        <Page>
          <OptionsCard>
            <Title>Additional Options</Title>
            <BodyText>
              Please choose the following option(s) and accept the terms and
              conditions.
            </BodyText>
            <FieldLabel>
              Certificate Issuer <TextLink>Learn more</TextLink>
            </FieldLabel>
            <IssuerSelect defaultValue="sha2">
              <option value="sha2">GoDaddy SHA-2</option>
            </IssuerSelect>
            <AgreeRow>
              <input type="checkbox" defaultChecked />
              <span>
                I agree to the terms and conditions of the{" "}
                <TextLink>Subscriber Agreement</TextLink>
              </span>
            </AgreeRow>
            <ButtonRow>
              <OutlineButton $w={106}>Cancel</OutlineButton>
              <RightButtons>
                <OutlineButton $w={88}>Back</OutlineButton>
                <OutlineButton $w={126}>Continue</OutlineButton>
              </RightButtons>
            </ButtonRow>
          </OptionsCard>

          <SealCard>
            <Seals>
              <Seal>
                <SealCaption $c="#111">
                  Certification
                  <br />
                  Authorities
                </SealCaption>
                <Globe $shift={3}>
                  <GlobeArt id="globeA" deep="#0a1f6e" rim="#1d64c8" />
                  <GlobeWord>WebTrust</GlobeWord>
                </Globe>
                <Bdo>BDO</Bdo>
              </Seal>
              <Seal>
                <SealCaption $c="#3d4d5e" $top={3}>
                  Certification
                  <br />
                  Authorities
                </SealCaption>
                <Globe $shift={-3}>
                  <GlobeArt
                    id="globeB"
                    deep="#163a5c"
                    rim="#2f78a8"
                    bandColor="#2ea043"
                    tailColor="#1c7a34"
                    band="M4 70Q48 50 94 70L94 82Q48 64 4 82Z"
                    tails="M4 76h11v10H8zM94 76H83v10h7z"
                  />
                  <GlobeWord>WebTrust</GlobeWord>
                  <RibbonText $top={60} $size={9}>
                    BR - SSL
                  </RibbonText>
                </Globe>
                <Bdo $shift={-7}>BDO</Bdo>
              </Seal>
              <Seal>
                <SealCaption $c="#26384c">
                  Certification
                  <br />
                  Authorities
                </SealCaption>
                <Globe $shift={-3}>
                  <GlobeArt
                    id="globeC"
                    deep="#163a5c"
                    rim="#2f78a8"
                    bandColor="#8a4a2c"
                    tailColor="#5e2c14"
                    band="M10 66Q48 50 88 66L88 76Q48 62 10 76Z"
                    tails="M10 68h12v10H13zM88 68H76v10h9z"
                  />
                  <GlobeWord>WebTrust</GlobeWord>
                  <RibbonText $top={58} $size={6.5}>
                    Extended Validation
                  </RibbonText>
                </Globe>
                <Bdo $shift={-7}>BDO</Bdo>
              </Seal>
            </Seals>
          </SealCard>
        </Page>

        <Scrollbar>
          <Triangle />
          <ScrollThumb />
          <Triangle $down />
        </Scrollbar>

        <ChatWindow>
          <ChatHeader>
            <Chatbubble />
            <ChatName>Mekala shirisha</ChatName>
            <HeaderIcons>
              <FiMinus size={24} strokeWidth={2.4} />
              <FiX size={24} strokeWidth={3} />
            </HeaderIcons>
          </ChatHeader>
          <ChatBody>
            <Messages>
              <Incoming $flat>
                “Hi there. Thanks for
                <br />
                reaching out- what brings
                <br />
                you in today?"
              </Incoming>
              <Incoming $gap={30}>
                Could you please help me
                <br />
                with the domain name ?
              </Incoming>
              <Meta $right>You at 11:05, Jan 2:</Meta>
              <OutgoingRow $gap={30}>
                <DoubleTick />
                <Outgoing>printanddesign.com.au</Outgoing>
              </OutgoingRow>
              <Meta $mb={6}>Mekala shirisha at 11:07, Jan 2:</Meta>
              <Incoming $flat $gap={30}>
                <a>
                  https://certs.godaddy.com/
                  <br />
                  wizard/create/DV_SSL/1/0
                </a>
                <br />
                <br />
                From the above link
                <br />
                please enter the domain
                <br />
                name and click on
                <br />
                continue.
              </Incoming>
              <Meta $right>You at 11:08, Jan 2:</Meta>
              <OutgoingRow>
                <SingleTick />
                <Outgoing>done</Outgoing>
              </OutgoingRow>
            </Messages>
            <ChatScroll>
              <SmallTriangle />
              <ChatThumb />
              <SmallTriangle $down />
            </ChatScroll>
          </ChatBody>
          <Typing>Typing...</Typing>
          <Composer>
            <FiPlus size={28} strokeWidth={2} />
            <ComposerHint>Type your message</ComposerHint>
            <SendIcon>
              <SendArrow />
            </SendIcon>
          </Composer>
        </ChatWindow>
      </Viewport>

      <Taskbar>
        <Weather>
          <SunIcon>
            <Badge>1</Badge>
          </SunIcon>
          <WeatherText>
            <div>6°C</div>
            <div>Sunny</div>
          </WeatherText>
        </Weather>
        <StartIcon>
          <i />
          <i />
          <i />
          <i />
        </StartIcon>
        <SearchBox>
          <FiSearch size={20} color="#222" strokeWidth={2.4} />
          Search
          <SearchArt>
            <AlienArt />
          </SearchArt>
        </SearchBox>
        <TaskIcons>
          <TaskIcon>
            <TaskView />
          </TaskIcon>
          <TaskIcon>
            <ChatIconTask />
          </TaskIcon>
          <TaskIcon $dot>
            <Firefox />
          </TaskIcon>
          <TaskIcon $dot>
            <Folder />
          </TaskIcon>
          <TaskIcon $dot>
            <FzBox>Fz</FzBox>
          </TaskIcon>
          <TaskIcon $active>
            <ChromeIcon />
            <ChromeBadge>A</ChromeBadge>
          </TaskIcon>
          <TaskIcon $dot>
            <VsCode />
          </TaskIcon>
          <TaskIcon>
            <ChromeIcon />
          </TaskIcon>
          <TaskIcon>
            <Paint />
          </TaskIcon>
          <TaskIcon>
            <Calculator />
          </TaskIcon>
          <TaskIcon>
            <Copilot />
          </TaskIcon>
          <TaskIcon $dot>
            <Notepad />
          </TaskIcon>
          <TaskIcon $dot>
            <XamppBox>
              <SiXampp size={22} />
            </XamppBox>
          </TaskIcon>
          <TaskIcon>
            <Remote />
          </TaskIcon>
        </TaskIcons>
        <Tray>
          <TrayCaret>
            <FiChevronUp />
          </TrayCaret>
          <Lang>
            ENG
            <br />
            IN
          </Lang>
          <TrayIcons>
            <FiWifi />
            <FiVolumeX />
            <BatteryIcon />
          </TrayIcons>
          <Clock>
            11:08
            <br />
            02-01-2024
          </Clock>
          <BellWrap>
            <FiBell fill="#14409a" />
          </BellWrap>
        </Tray>
      </Taskbar>
    </Screen>
  </>
);

export default App;
